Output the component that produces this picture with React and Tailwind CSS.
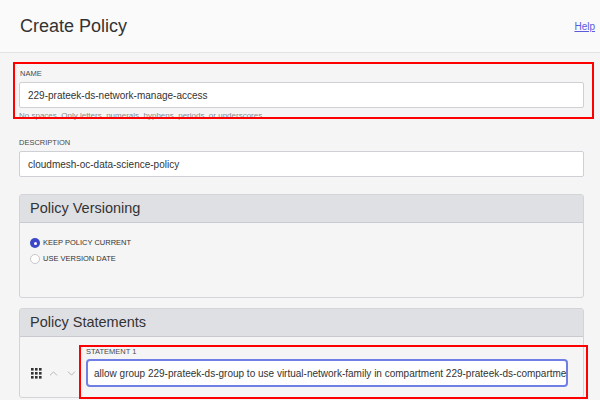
import React from 'react';
import { ChevronUp, ChevronDown } from 'lucide-react';

function Label({ children, className = '' }) {
  return (
    <div className={`text-[7.5px] leading-[10px] h-[10px] uppercase text-[#4a4a4a] ${className}`}>
      {children}
    </div>
  );
}

function TextBox({ value, className = '' }) {
  return (
    <div
      className={`h-[26px] bg-white border border-[#cfd0d6] rounded-[2px] flex items-center px-[8px] text-[10px] text-[#333] whitespace-nowrap overflow-hidden ${className}`}
    >
      {value}
    </div>
  );
}

function Radio({ checked, label }) {
  return (
    <div className="flex items-center gap-[3px] h-[16px]">
      {checked ? (
        <span className="w-[10px] h-[10px] rounded-full bg-[#3c48c8] flex items-center justify-center">
          <span className="w-[3px] h-[3px] rounded-full bg-white" />
        </span>
      ) : (
        <span className="w-[10px] h-[10px] rounded-full bg-white border border-[#c6c6cc]" />
      )}
      <span className="text-[7.5px] text-[#333] uppercase">{label}</span>
    </div>
  );
}

function Panel({ title, children, bodyClass = '' }) {
  return (
    <div className="border border-[#d3d4da] rounded-[3px] bg-[#f5f5f5]">
      <div className="h-[28px] bg-[#dfe0e4] border-b border-[#c9cad0] flex items-center px-[10px] text-[14.5px] text-[#333]">
        {title}
      </div>
      <div className={bodyClass}>{children}</div>
    </div>
  );
}

function DragDots() {
  return (
    <svg width="11" height="11" viewBox="0 0 11 11">
      {[0, 4, 8].map(y =>
        [0, 4, 8].map(x => <rect key={`${x}-${y}`} x={x} y={y} width="2.6" height="2.6" fill="#333" />)
      )}
    </svg>
  );
}

export default function App() {
  return (
    <div className="relative w-[600px] h-[400px] overflow-hidden bg-[#f5f5f5] font-['Liberation_Sans',Arial,sans-serif]">
      <div className="h-[53px] bg-[#fafafa] border-b border-[#e3e3e3] flex items-center justify-between pl-[20px] pr-[5px]">
        <h1 className="text-[18px] text-[#333] font-normal">Create Policy</h1>
        <a className="text-[10px] text-[#5b5be0] underline">Help</a>
      </div>

      <div className="pl-[19px] pr-[16px]">
        <Label className="mt-[16px] pl-[1px]">Name</Label>
        <TextBox className="mt-[3px]" value="229-prateek-ds-network-manage-access" />
        <div className="mt-[3px] text-[8px] leading-[10px] h-[10px] text-[#8a8a8a]">
          No spaces. Only letters, numerals, hyphens, periods, or underscores.
        </div>

        <Label className="mt-[17px]">Description</Label>
        <TextBox className="mt-[3px]" value="cloudmesh-oc-data-science-policy" />

        <div className="mt-[17px]">
          <Panel title="Policy Versioning" bodyClass="h-[74px] pt-[12px] pl-[10px]">
            <Radio checked label="Keep policy current" />
            <Radio label="Use version date" />
          </Panel>
        </div>

        <div className="mt-[10px]">
          <Panel title="Policy Statements" bodyClass="flex items-end pl-[11px] pr-[15px] pt-[10px] pb-[10px]">
            <div className="flex items-center h-[28px] gap-[5px] mr-[8px]">
              <DragDots />
              <ChevronUp size={13} strokeWidth={1.4} className="text-[#a4a4ac]" />
              <ChevronDown size={13} strokeWidth={1.4} className="text-[#a4a4ac]" />
            </div>
            <div className="flex-1 min-w-0">
              <Label>Statement 1</Label>
              <div className="mt-[2px] h-[28px] bg-white border-2 border-[#6f7fe6] rounded-[4px] flex items-center px-[6px] text-[10px] text-[#333] whitespace-nowrap overflow-hidden">
                allow group 229-prateek-ds-group to use virtual-network-family in compartment 229-prateek-ds-compartment
              </div>
            </div>
          </Panel>
        </div>
      </div>

      <div className="absolute left-[13px] top-[62px] w-[581px] h-[57px] border-2 border-[#ff0000] pointer-events-none" />
      <div className="absolute left-[79px] top-[345px] w-[509px] h-[54px] border-2 border-[#ff0000] pointer-events-none" />
    </div>
  );
}
